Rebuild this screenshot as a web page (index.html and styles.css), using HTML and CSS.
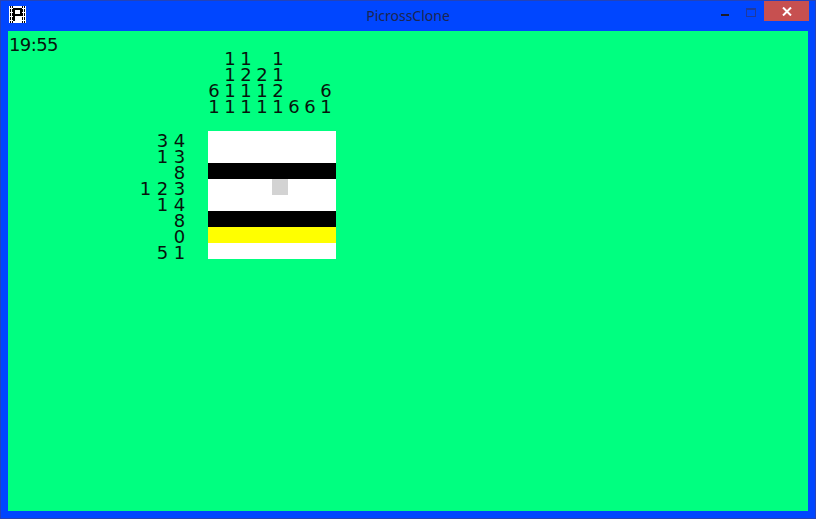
FILE: index.html
```html
<!DOCTYPE html>
<html>
<head>
<meta charset="utf-8">
<title>PicrossClone</title>
<link rel="stylesheet" href="styles.css">
</head>
<body>
<div class="window">
  <div class="titlebar">
    <svg class="app-icon" width="17" height="17" viewBox="0 0 17 17">
      <rect x="0" y="0" width="17" height="17" fill="#fff"/>
      <g fill="#000">
        <rect x="1" y="0" width="1" height="17"/>
        <rect x="3" y="0" width="1" height="17"/>
        <rect x="13" y="0" width="1" height="17"/>
        <rect x="15" y="0" width="1" height="17"/>
      </g>
      <g fill="#fff">
        <rect x="0" y="2" width="17" height="1"/>
        <rect x="0" y="6" width="17" height="1"/>
        <rect x="0" y="10" width="17" height="1"/>
        <rect x="0" y="14" width="17" height="1"/>
      </g>
      <g fill="#000">
        <rect x="4" y="2" width="9" height="2"/>
        <rect x="4" y="2" width="2" height="13"/>
        <rect x="11" y="2" width="2" height="7"/>
        <rect x="4" y="8" width="9" height="2"/>
      </g>
    </svg>
    <div class="title">PicrossClone</div>
    <div class="controls">
      <div class="btn btn-min"><span class="min-bar"></span></div>
      <div class="btn btn-max"><span class="max-box"></span></div>
      <div class="btn btn-close">
        <svg width="10" height="9" viewBox="0 0 10 9">
          <path d="M1 0.5 L9 8.5 M9 0.5 L1 8.5" stroke="#fff" stroke-width="2" fill="none"/>
        </svg>
      </div>
    </div>
  </div>
  <div class="client">
    <div class="clock">19:55</div>
    <div class="puzzle">
      <div class="corner"></div>
      <div class="col-clues">
        <div class="col"><span>6</span><span>1</span></div>
        <div class="col"><span>1</span><span>1</span><span>1</span><span>1</span></div>
        <div class="col"><span>1</span><span>2</span><span>1</span><span>1</span></div>
        <div class="col"><span>2</span><span>1</span><span>1</span></div>
        <div class="col"><span>1</span><span>1</span><span>2</span><span>1</span></div>
        <div class="col"><span>6</span></div>
        <div class="col"><span>6</span></div>
        <div class="col"><span>6</span><span>1</span></div>
      </div>
      <div class="row-clues">
        <div class="rc"><span>3</span><span>4</span></div>
        <div class="rc"><span>1</span><span>3</span></div>
        <div class="rc"><span>8</span></div>
        <div class="rc"><span>1</span><span>2</span><span>3</span></div>
        <div class="rc"><span>1</span><span>4</span></div>
        <div class="rc"><span>8</span></div>
        <div class="rc"><span>0</span></div>
        <div class="rc"><span>5</span><span>1</span></div>
      </div>
      <div class="board">
        <div class="brow white"></div>
        <div class="brow white"></div>
        <div class="brow black"></div>
        <div class="brow white"><span class="cursor"></span></div>
        <div class="brow white"></div>
        <div class="brow black"></div>
        <div class="brow yellow"></div>
        <div class="brow white"></div>
      </div>
    </div>
  </div>
</div>
</body>
</html>
```

FILE: styles.css
```css
html, body {
  margin: 0;
  padding: 0;
  background: #0046ff;
}

.window {
  width: 816px;
  height: 519px;
  box-sizing: border-box;
  border: 1px solid #2443b8;
  background: #0046ff;
  padding: 0 7px 7px 7px;
  display: flex;
  flex-direction: column;
}

.titlebar {
  height: 30px;
  margin: 0 -7px;
  display: flex;
  align-items: flex-start;
  position: relative;
}

.app-icon {
  display: block;
  margin: 5px 0 0 8px;
}

.title {
  position: absolute;
  left: 0;
  right: 0;
  top: 7px;
  text-align: center;
  font-family: "Noto Sans", "Open Sans", sans-serif;
  font-size: 14px;
  line-height: 16px;
  color: #1d2550;
}

.controls {
  margin-left: auto;
  margin-right: 6px;
  display: flex;
  align-items: flex-start;
}

.btn {
  height: 20px;
  display: flex;
  align-items: center;
  justify-content: center;
}

.btn-min {
  width: 26px;
  align-items: flex-start;
}

.min-bar {
  display: block;
  width: 8px;
  height: 2px;
  margin-top: 13px;
  background: #1c1c2a;
}

.btn-max {
  width: 26px;
  align-items: flex-start;
}

.max-box {
  display: block;
  width: 8px;
  height: 6px;
  margin-top: 7px;
  border: 1px solid #1f3a9e;
  border-top-width: 2px;
}

.btn-close {
  width: 45px;
  background: #c75050;
}

.client {
  flex: 1;
  background: #00ff80;
  padding-top: 7px;
  font-family: "DejaVu Sans", sans-serif;
  font-size: 18px;
  color: #06140c;
}

.clock {
  line-height: 13px;
  padding-left: 1px;
  letter-spacing: -0.6px;
}

.puzzle {
  display: grid;
  grid-template-columns: 51px 128px;
  grid-template-rows: 64px 128px;
  column-gap: 20px;
  row-gap: 16px;
  margin-left: 129px;
}

.col-clues {
  display: flex;
  margin-left: -2px;
}

.col {
  width: 16px;
  display: flex;
  flex-direction: column;
  justify-content: flex-end;
  align-items: center;
}

.col span,
.rc span {
  display: block;
  line-height: 16px;
  height: 16px;
  text-align: center;
}

.row-clues {
  padding-top: 2px;
  display: flex;
  flex-direction: column;
}

.rc {
  height: 16px;
  display: flex;
  justify-content: flex-end;
}

.rc span {
  width: 17px;
}

.board {
  display: flex;
  flex-direction: column;
}

.brow {
  height: 16px;
  display: flex;
}

.white { background: #ffffff; }
.black { background: #000000; }
.yellow { background: #ffff00; }

.cursor {
  display: block;
  width: 16px;
  height: 16px;
  margin-left: 64px;
  background: #d3d3d3;
}
```
